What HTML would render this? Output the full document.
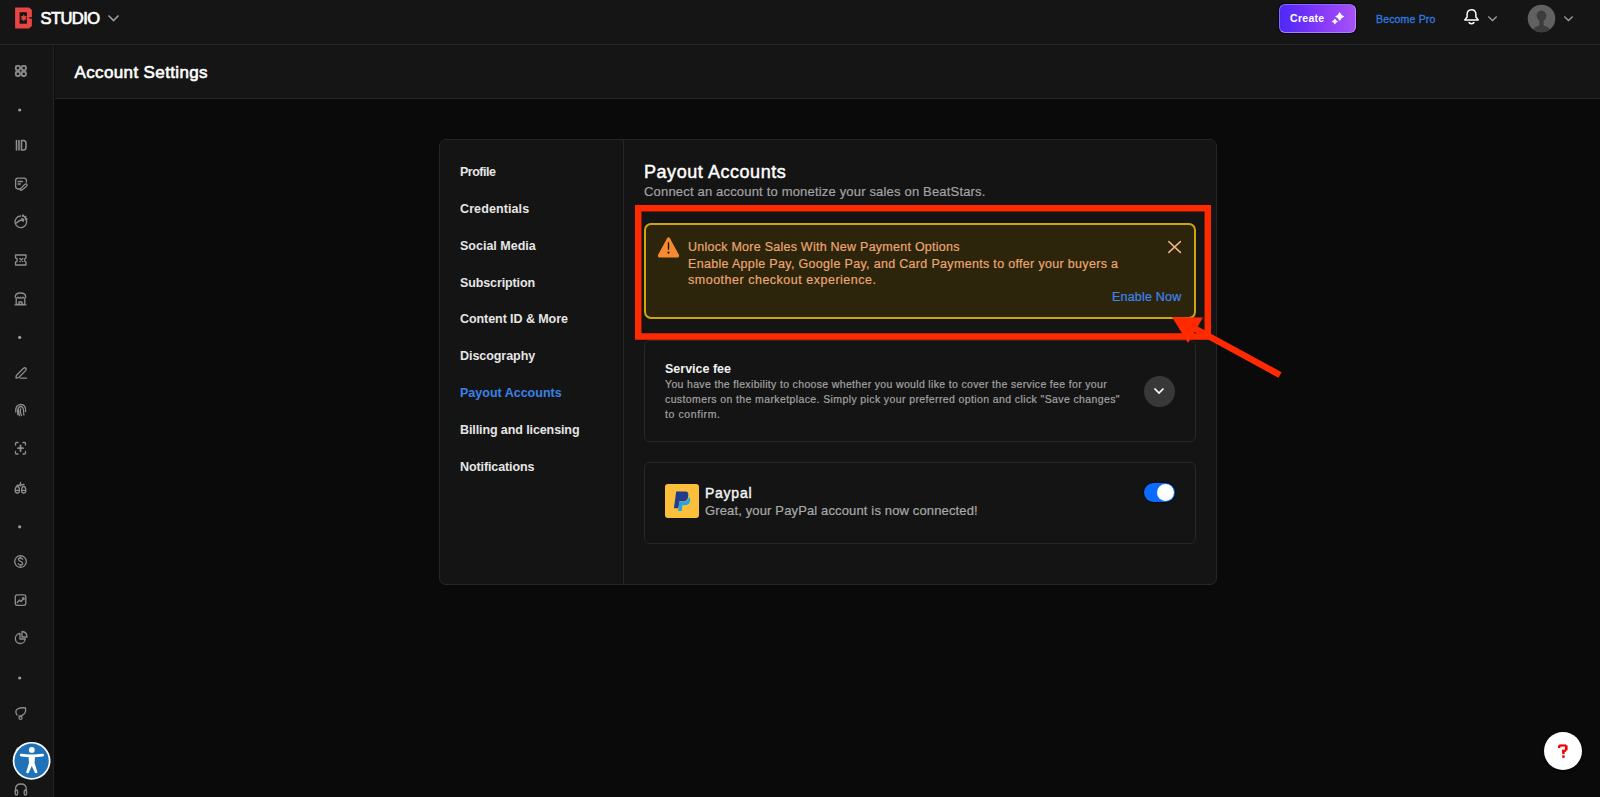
<!DOCTYPE html>
<html><head><meta charset="utf-8">
<style>
*{box-sizing:border-box;margin:0;padding:0}
html,body{width:1600px;height:797px;overflow:hidden;background:#0a0a0a;font-family:"Liberation Sans",sans-serif;color:#fff}
.a{position:absolute}
.t{position:absolute;white-space:nowrap;line-height:1}
#hdr{left:0;top:0;width:1600px;height:45px;background:#151515;border-bottom:1px solid #262626}
#side{left:0;top:45px;width:54px;height:752px;background:#151515;border-right:1px solid #232323}
#sub{left:54px;top:45px;width:1546px;height:54px;background:#151515;border-bottom:1px solid #262626}
#card{left:439px;top:139px;width:778px;height:446px;background:#141414;border:1px solid #262626;border-radius:7px}
#navsep{left:623px;top:140px;width:1px;height:444px;background:#262626}
.nv{font-size:12.5px;font-weight:bold;color:#e6e6e6;left:460px}
.ic{position:absolute;left:13px;width:16px;height:16px}
.dot{position:absolute;left:18px;width:3px;height:3px;border-radius:50%;background:#9a9a9a}
</style></head><body>
<!-- header -->
<div id="hdr" class="a">
  <svg class="a" style="left:15px;top:7px" width="17" height="22" viewBox="0 0 17 22">
    <path d="M0.1 0.4 H14 L16.9 2.9 V19 L14 21.5 H0.1 Z" fill="#e84545"/>
    <rect x="4.6" y="5.2" width="7.3" height="11.5" fill="#151515"/>
    <path d="M8.80 7.20 L9.75 9.25 L12.00 9.05 L10.70 10.90 L12.00 12.75 L9.75 12.55 L8.80 14.60 L7.85 12.55 L5.60 12.75 L6.90 10.90 L5.60 9.05 L7.85 9.25Z" fill="#e84545"/>
    <rect x="14.3" y="10.2" width="2.7" height="1.4" fill="#151515"/>
  </svg>
  <div class="t" style="left:40.5px;top:10.3px;font-size:16.5px;letter-spacing:-0.55px;-webkit-text-stroke:0.7px #fff">STUDIO</div>
  <svg class="a" style="left:107px;top:14px" width="13" height="9" viewBox="0 0 13 9"><path d="M1.5 1.5 L6.5 6.5 L11.5 1.5" stroke="#9c9c9c" stroke-width="1.6" fill="none"/></svg>

  <div class="a" style="left:1279px;top:4px;width:77px;height:29px;border-radius:6px;background:linear-gradient(90deg,#4f29f7 0%,#6a30f8 30%,#8a3cf9 60%,#a652f6 100%);border:1px solid #8c66ff;border-right-color:#c28aff;border-bottom-color:#b07cff;box-shadow:0 0 0 1px #060606"></div>
  <div class="t" style="left:1290px;top:13px;font-size:10.5px;font-weight:bold;color:#fff;letter-spacing:0.3px">Create</div>
  <svg class="a" style="left:1330px;top:10px" width="17" height="17" viewBox="0 0 17 17">
    <path d="M9.7 1.9000000000000004 Q11.08 5.12 14.299999999999999 6.5 Q11.08 7.88 9.7 11.1 Q8.32 7.88 5.1 6.5 Q8.32 5.12 9.7 1.9000000000000004Z" fill="#fff"/>
    <path d="M4.9 8.4 Q5.83 10.57 8.0 11.5 Q5.83 12.43 4.9 14.6 Q3.97 12.43 1.8000000000000003 11.5 Q3.97 10.57 4.9 8.4Z" fill="#fff"/>
  </svg>
  <div class="t" style="left:1376px;top:14px;font-size:10.5px;color:#2f78de;letter-spacing:0.17px;-webkit-text-stroke:0.35px #2f78de">Become Pro</div>

  <svg class="a" style="left:1463px;top:8px" width="17" height="18" viewBox="0 0 17 18">
    <path d="M8.5 1.7 C5.6 1.7 4.1 3.6 4.1 6.6 V9 L1.8 11.9 H15.2 L12.9 9 V6.6 C12.9 3.6 11.4 1.7 8.5 1.7Z" stroke="#fff" stroke-width="1.5" fill="none" stroke-linejoin="round"/>
    <path d="M6.2 14.6 Q8.5 16.9 10.8 14.6" stroke="#fff" stroke-width="1.6" fill="none" stroke-linecap="round"/>
  </svg>
  <svg class="a" style="left:1487px;top:15px" width="11" height="7" viewBox="0 0 11 7"><path d="M1.3 1.5 L5.5 5.5 L9.7 1.5" stroke="#9c9c9c" stroke-width="1.3" fill="none"/></svg>

  <svg class="a" style="left:1527px;top:4px" width="29" height="29" viewBox="0 0 29 29">
    <defs><clipPath id="av"><circle cx="14.5" cy="14.5" r="13.8"/></clipPath></defs>
    <circle cx="14.5" cy="14.5" r="13.8" fill="#616161"/>
    <g clip-path="url(#av)" fill="#3d3d3d">
      <ellipse cx="14.5" cy="11.8" rx="4.8" ry="5.4"/>
      <rect x="12.3" y="15" width="4.4" height="7"/>
      <ellipse cx="14.5" cy="29.5" rx="10" ry="8"/>
    </g>
  </svg>
  <svg class="a" style="left:1563px;top:15px" width="11" height="7" viewBox="0 0 11 7"><path d="M1.3 1.5 L5.5 5.5 L9.7 1.5" stroke="#9c9c9c" stroke-width="1.3" fill="none"/></svg>
</div>

<!-- sidebar -->
<div id="side" class="a"></div>
<svg class="a" style="left:0;top:0" width="54" height="797" viewBox="0 0 54 797" fill="none" stroke="#8e8e8e" stroke-width="1.3" stroke-linecap="round" stroke-linejoin="round">
  <!-- grid 71 -->
  <g stroke-width="1.9" stroke="#8a8a8a"><rect x="15.8" y="65.9" width="4.2" height="4.2" rx="1.4"/><rect x="21.7" y="65.9" width="4.2" height="4.2" rx="1.4"/>
  <rect x="15.8" y="71.8" width="4.2" height="4.2" rx="1.4"/><rect x="21.7" y="71.8" width="4.2" height="4.2" rx="1.4"/></g>
  <circle cx="19.7" cy="110" r="1.6" fill="#9a9a9a" stroke="none"/>
  <!-- library 145 -->
  <path d="M16.5 140.5 V150 M19 140.5 V150 M21.5 140.5 H23.5 Q26 140.5 26 143.5 V147 Q26 150 23.5 150 H21.5 Z" stroke-width="1.6"/>
  <!-- edit doc 183 -->
  <path d="M21 189 H18 Q15.6 189 15.6 186.6 V180.6 Q15.6 178.2 18 178.2 H24 Q26.4 178.2 26.4 180.6 V182"/>
  <path d="M18 181.5 H22.5 M18 184 H20.5"/>
  <path d="M20.5 188.6 L25 184.2 Q26.4 183.4 27 184.6 Q27.4 185.6 26.4 186.4 L22 190 L20.3 190.2 Z"/>
  <!-- gauge 222 -->
  <path d="M25.6 218.5 A5.8 5.8 0 1 1 20.5 216"/>
  <path d="M15.5 223.5 Q19 220 23.5 219.5 M21.5 218.6 L23.8 219.3 L23 221.5"/>
  <circle cx="23" cy="215.8" r="0.6" fill="#8e8e8e"/><circle cx="25.2" cy="217" r="0.6" fill="#8e8e8e"/><circle cx="26.3" cy="219.2" r="0.6" fill="#8e8e8e"/>
  <!-- ticket 260 -->
  <path d="M15.5 255 H26 V258 Q24.6 258 24.6 260 Q24.6 262 26 262 V265 H15.5 V262 Q17.2 262 17.2 260 Q17.2 258 15.5 258 Z"/>
  <path d="M19.8 258.5 L22.8 261.5 M22.8 258.5 L19.8 261.5"/>
  <!-- store 299 -->
  <path d="M15.3 297 Q15.3 293 20.5 293 Q25.7 293 25.7 297 Q24.8 299 23 297.2 Q21 299.2 20.5 297.2 Q19.8 299.2 18 297.2 Q16.2 299 15.3 297 Z"/>
  <path d="M16.2 299 V304.5 H24.8 V299 M15 304.8 H26 M19 304.5 V302 H22 V304.5"/>
  <circle cx="19.7" cy="337.4" r="1.6" fill="#9a9a9a" stroke="none"/>
  <!-- pen 373 -->
  <path d="M16 378 L16.3 375.5 L23.5 368.3 Q24.7 367.3 25.8 368.3 Q26.8 369.4 25.6 370.6 L18.5 377.7 Z"/>
  <path d="M20.5 378.2 H26.5"/>
  <!-- fingerprint 410 -->
  <path d="M15.8 412 Q15.2 404.5 20.7 404.3 Q26 404.5 25.6 411.5 M17.8 414.5 Q17 406.5 20.7 406.5 Q23.8 406.5 23.6 412.5 M20.7 408.8 Q19.5 412 21.5 415.5 M18.5 409 Q18.5 413 19.5 415.8 M23.5 413.5 L24 415"/>
  <!-- scan 448 -->
  <path d="M15.5 445 V443.5 Q15.5 442.5 16.5 442.5 H18 M23 442.5 H24.5 Q25.5 442.5 25.5 443.5 V445 M25.5 451.5 V453 Q25.5 454 24.5 454 H23 M18 454 H16.5 Q15.5 454 15.5 453 V451.5"/>
  <path d="M18 448.2 H23 M20.5 445.5 V451" stroke-width="1.8"/>
  <!-- scale 488 -->
  <path d="M20.5 482.5 V486 M17 485.5 L24 484.5"/>
  <path d="M15.2 490.5 Q15.2 486.5 17.3 486.5 Q19.4 486.5 19.4 490.5 Q19.4 493 17.3 493 Q15.2 493 15.2 490.5 Z M21.6 490.5 Q21.6 486.5 23.7 486.5 Q25.8 486.5 25.8 490.5 Q25.8 493 23.7 493 Q21.6 493 21.6 490.5 Z M15.3 490.3 H19.3 M21.7 490.3 H25.7"/>
  <circle cx="19.7" cy="526.8" r="1.6" fill="#9a9a9a" stroke="none"/>
  <!-- dollar 561 -->
  <circle cx="20.5" cy="561.5" r="5.8"/>
  <path d="M22.6 559.3 Q22 558 20.5 558 Q18.5 558 18.5 559.6 Q18.5 561 20.5 561.4 Q22.6 561.8 22.6 563.4 Q22.6 565 20.5 565 Q18.8 565 18.3 563.6 M20.5 556.8 V558 M20.5 565 V566.2"/>
  <!-- image 600 -->
  <rect x="15.3" y="594.8" width="10.5" height="10.5" rx="2"/>
  <path d="M17.3 602.5 L19.5 600 L21 601.5 L23.8 598.3 M22.4 598 H24 V599.6"/>
  <!-- pie 638 -->
  <path d="M20 633.5 A5 5 0 1 0 25.3 639 H20 Z"/>
  <path d="M22 631.5 L22 637 L27 637 Q27 632 22 631.5 Z"/>
  <circle cx="19.7" cy="678" r="1.6" fill="#9a9a9a" stroke="none"/>
  <!-- badge 713 -->
  <path d="M17 715 Q14.5 711 17.5 709 Q21 707.2 25.5 708 Q26.3 712 23.5 714.6 Q21.5 716.5 19 716"/>
  <circle cx="20.5" cy="717.9" r="1.5"/>
  <!-- hidden 752 -->
  <path d="M16 752 Q16 747.5 20.5 747.5"/>
  <!-- headphones 789 -->
  <path d="M15.5 792 V789 Q15.5 784 20.9 784 Q26.3 784 26.3 789 V792"/>
  <rect x="15.2" y="790" width="2.4" height="5" rx="1.2"/><rect x="24.2" y="790" width="2.4" height="5" rx="1.2"/>
</svg>

<!-- sub header -->
<div id="sub" class="a">
  <div class="t" style="left:20.5px;top:18.8px;font-size:17px;letter-spacing:0.37px;-webkit-text-stroke:0.6px #fff">Account Settings</div>
</div>

<div class="a" style="left:54px;top:45px;width:1px;height:752px;background:#0c0c0c"></div>
<!-- card -->
<div id="card" class="a"></div>
<div id="navsep" class="a"></div>
<div class="t nv" style="top:166.2px;letter-spacing:-0.5px">Profile</div>
<div class="t nv" style="top:203.0px;letter-spacing:0.1px">Credentials</div>
<div class="t nv" style="top:239.8px;letter-spacing:0px">Social Media</div>
<div class="t nv" style="top:276.6px;letter-spacing:-0.12px">Subscription</div>
<div class="t nv" style="top:313.4px;letter-spacing:-0.07px">Content ID &amp; More</div>
<div class="t nv" style="top:350.2px;letter-spacing:-0.05px">Discography</div>
<div class="t nv" style="top:387.0px;color:#3a82e8;letter-spacing:0px">Payout Accounts</div>
<div class="t nv" style="top:423.8px;letter-spacing:-0.1px">Billing and licensing</div>
<div class="t nv" style="top:460.6px;letter-spacing:-0.1px">Notifications</div>

<div class="t" style="left:644px;top:163px;font-size:18px;color:#fff;letter-spacing:0.55px;-webkit-text-stroke:0.45px #fff">Payout Accounts</div>
<div class="t" style="left:644px;top:185.2px;font-size:13px;color:#a3a3a3;-webkit-text-stroke:0.2px;letter-spacing:0.18px">Connect an account to monetize your sales on BeatStars.</div>

<!-- alert -->
<div class="a" style="left:644px;top:223px;width:552px;height:96px;background:#2c250b;border:2px solid #cfa50e;border-radius:7px"></div>
<svg class="a" style="left:657px;top:236px" width="23" height="23" viewBox="0 0 23 23">
  <path d="M11.5 1.2 Q12.3 1.2 12.9 2.2 L21.9 18.8 Q22.6 21.4 20.4 21.5 H2.6 Q0.4 21.4 1.1 18.8 L10.1 2.2 Q10.7 1.2 11.5 1.2Z" fill="#f58a32"/>
  <rect x="10.85" y="6.2" width="1.3" height="7.6" rx="0.6" fill="#0d0a02"/>
  <circle cx="11.5" cy="16.6" r="1.05" fill="#0d0a02"/>
</svg>
<div class="t" style="left:688px;top:241.4px;font-size:12.5px;color:#eaa673;-webkit-text-stroke:0.2px;letter-spacing:0.25px">Unlock More Sales With New Payment Options</div>
<div class="t" style="left:688px;top:257.9px;font-size:12.5px;color:#eaa673;-webkit-text-stroke:0.2px;letter-spacing:0.32px">Enable Apple Pay, Google Pay, and Card Payments to offer your buyers a</div>
<div class="t" style="left:688px;top:274.4px;font-size:12.5px;color:#eaa673;-webkit-text-stroke:0.2px;letter-spacing:0.51px">smoother checkout experience.</div>
<svg class="a" style="left:1167px;top:240px" width="15" height="15" viewBox="0 0 15 15"><path d="M1.8 1.6 L13.4 12.4 M13.4 1.6 L1.8 12.4" stroke="#eeb282" stroke-width="1.5" stroke-linecap="round"/></svg>
<div class="t" style="left:1112px;top:291px;font-size:12.5px;color:#3d86f0;-webkit-text-stroke:0.2px;letter-spacing:0.2px">Enable Now</div>

<!-- service fee -->
<div class="a" style="left:644px;top:340px;width:552px;height:102px;border:1px solid #262626;border-radius:6px"></div>
<div class="t" style="left:665px;top:363px;font-size:12.5px;font-weight:bold;color:#f2f2f2">Service fee</div>
<div class="t" style="left:665px;top:379px;font-size:10.5px;color:#a3a3a3;-webkit-text-stroke:0.2px;letter-spacing:0.34px">You have the flexibility to choose whether you would like to cover the service fee for your</div>
<div class="t" style="left:665px;top:394.1px;font-size:10.5px;color:#a3a3a3;-webkit-text-stroke:0.2px;letter-spacing:0.39px">customers on the marketplace. Simply pick your preferred option and click "Save changes"</div>
<div class="t" style="left:665px;top:409.2px;font-size:10.5px;color:#a3a3a3;-webkit-text-stroke:0.2px;letter-spacing:0.59px">to confirm.</div>
<div class="a" style="left:1144px;top:376px;width:31px;height:31px;border-radius:50%;background:#383838"></div>
<svg class="a" style="left:1152px;top:386px" width="14" height="10" viewBox="0 0 14 10"><path d="M2.5 2.5 L7 7 L11.5 2.5" stroke="#fff" stroke-width="1.7" fill="none"/></svg>

<!-- paypal -->
<div class="a" style="left:644px;top:462px;width:552px;height:82px;border:1px solid #262626;border-radius:6px"></div>
<div class="a" style="left:665px;top:484px;width:34px;height:34px;border-radius:3px;background:#fbbf3b"></div>
<svg class="a" style="left:660px;top:480px" width="44" height="42" viewBox="0 0 44 42">
  <path d="M16.2 11.4 H25.5 Q28.8 11.6 28.3 15.2 L27.9 17.8 Q27.2 21.2 23.8 21.2 H19.6 L18.3 28.2 H13.9 Z" fill="#243a8a"/>
  <path d="M29.4 16.8 Q30.6 18.6 30 21.4 Q29 25.2 24.6 25.2 H22.4 L21.7 30.9 H18.1 L19.6 21.4 H24.2 Q27.8 21.2 28.5 18.2 Z" fill="#22a4e4"/>
</svg>
<div class="t" style="left:705px;top:486px;font-size:14px;color:#f4f4f4;letter-spacing:0.75px;-webkit-text-stroke:0.4px #f4f4f4">Paypal</div>
<div class="t" style="left:705px;top:504.3px;font-size:13px;color:#a9a9a9;-webkit-text-stroke:0.2px;letter-spacing:0.14px">Great, your PayPal account is now connected!</div>
<div class="a" style="left:1143px;top:482px;width:33px;height:21px;border-radius:11px;background:#0b0b0b"></div>
<div class="a" style="left:1144px;top:483px;width:31px;height:19px;border-radius:10px;background:#0a6cff"></div>
<div class="a" style="left:1157px;top:484px;width:17px;height:17px;border-radius:50%;background:#fff"></div>

<!-- annotation -->
<svg class="a" style="left:0;top:0" width="1600" height="797">
  <rect x="638.2" y="208.2" width="569.6" height="128.3" fill="none" stroke="#ff2a00" stroke-width="6.5"/>
  <line x1="1280" y1="375" x2="1192" y2="327" stroke="#ff2a00" stroke-width="6.5"/>
  <path d="M1172 317 L1203 317.5 L1188 343 Z" fill="#ff2a00"/>
</svg>

<!-- help -->
<div class="a" style="left:1544px;top:732px;width:38px;height:38px;border-radius:50%;background:#fff;box-shadow:0 1px 3px rgba(0,0,0,.5)"></div>
<svg class="a" style="left:1556px;top:742px" width="14" height="18" viewBox="0 0 14 18" fill="#f20000">
  <rect x="3.2" y="2.4" width="7" height="2.2"/><rect x="2" y="3.4" width="2.4" height="2.6"/>
  <rect x="9" y="3.4" width="2.6" height="5"/><rect x="6.2" y="7.6" width="4" height="2.2"/>
  <rect x="6.2" y="8.5" width="2.5" height="3.6"/><rect x="6.2" y="13.3" width="2.5" height="2.5"/>
</svg>

<!-- accessibility -->
<svg class="a" style="left:12px;top:741px" width="40" height="40" viewBox="0 0 40 40">
  <circle cx="19.6" cy="19.8" r="18.9" fill="#fff"/>
  <circle cx="19.6" cy="19.8" r="17.2" fill="#1f72b8"/>
  <circle cx="19.8" cy="8.9" r="2.9" fill="#fff"/>
  <path d="M9.2 14.2 Q19.8 15.6 30.6 14.2" stroke="#fff" stroke-width="2.8" fill="none" stroke-linecap="round"/>
  <path d="M16.6 15 H23 L22.6 22 L25.4 31 Q25.4 32.2 24 32.2 L23 32 L19.8 25 L16.6 32 L15.6 32.2 Q14.2 32.2 14.2 31 L17 22 Z" fill="#fff"/>
</svg>
</body></html>
